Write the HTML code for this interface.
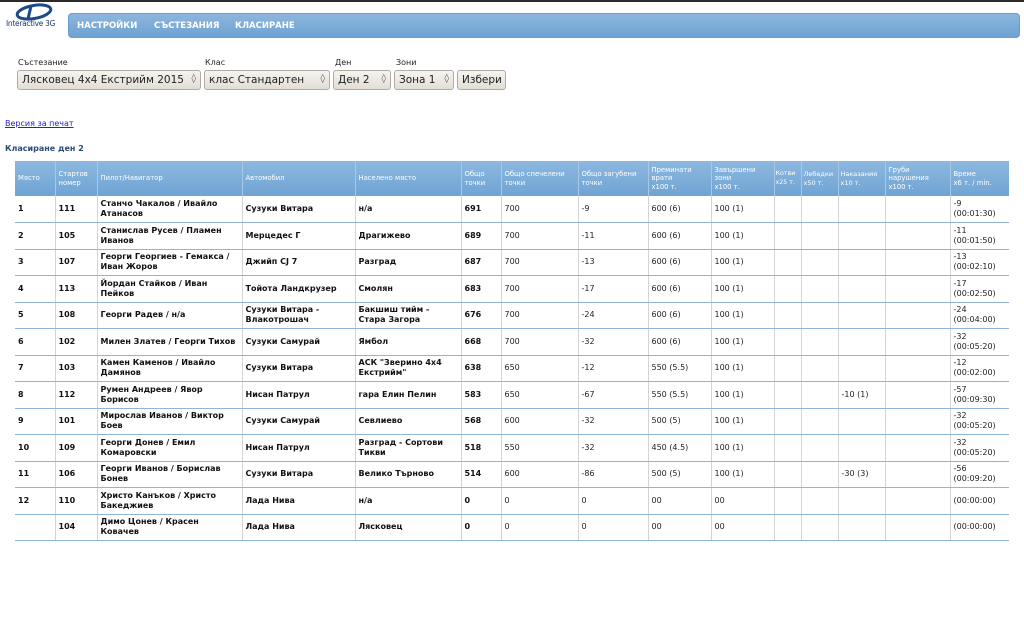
<!DOCTYPE html>
<html><head><meta charset="utf-8">
<style>
*{box-sizing:border-box}
body{margin:0;width:1024px;height:640px;background:#fff;font-family:"DejaVu Sans","Liberation Sans",sans-serif;position:relative;overflow:hidden}
.topline{position:absolute;left:0;top:0;width:1024px;height:2px;background:#2a2a2a}
.logo{position:absolute;left:4px;top:3px;width:60px;height:26px}
.logo .t{position:absolute;left:2px;top:16px;font:7.5px "DejaVu Sans",sans-serif;color:#1a3a6a;white-space:nowrap;letter-spacing:-0.3px}
.nav{position:absolute;left:68px;top:13px;width:952px;height:25px;border-radius:4px;background:linear-gradient(#8cb6de,#6ea2d2);border:1px solid #6a9ccc}
.nav span{position:absolute;top:7px;color:#fff;font-weight:bold;font-size:8.5px}
.lbl{position:absolute;top:58px;font-size:8px;color:#222}
.sel{position:absolute;top:70px;height:20px;border:1px solid #b0aca4;border-radius:3px;background:linear-gradient(#f6f4f0,#e2ded6);font-size:10.5px;color:#222;padding:3px 0 0 4px;white-space:nowrap;overflow:hidden}
.sel i{position:absolute;right:4px;top:3px;font-style:normal;font-size:9px;color:#555}
.link{position:absolute;left:5px;top:119px;font-size:8px;color:#2323c8;text-decoration:underline}
.h2{position:absolute;left:5px;top:144px;font-size:8px;font-weight:bold;color:#2c4a78}
table{position:absolute;left:15px;top:161px;border-collapse:collapse;table-layout:fixed;width:994px}
th{background:linear-gradient(#8cb8e0,#70a4d4);color:#fff;font-weight:normal;font-size:6.8px;text-align:left;vertical-align:middle;padding:0 1px 0 3px;height:35px;border-left:1px solid #a8c8e8;line-height:8.5px;white-space:nowrap;overflow:hidden}
td{font-size:8px;height:26.5px;padding:0 3px;border-left:1px solid #d4d4d4;border-bottom:1px solid #8fb5da;color:#222;line-height:10px;vertical-align:middle}
td.b{font-weight:bold;color:#111}
tr td:first-child,tr th:first-child{border-left:none}
</style></head><body>
<div class="topline"></div>
<div class="logo">
<svg width="56" height="18" viewBox="0 0 56 18"><ellipse cx="30" cy="9" rx="17" ry="6.5" fill="none" stroke="#1a4a8a" stroke-width="3" transform="rotate(-10 30 9)"/><path d="M27 3 L24 16" stroke="#1a4a8a" stroke-width="3"/></svg>
<div class="t">Interactive 3G</div>
</div>
<div class="nav"><span style="left:8px">НАСТРОЙКИ</span><span style="left:85px">СЪСТЕЗАНИЯ</span><span style="left:166px">КЛАСИРАНЕ</span></div>
<div class="lbl" style="left:18px">Състезание</div>
<div class="lbl" style="left:205px">Клас</div>
<div class="lbl" style="left:335px">Ден</div>
<div class="lbl" style="left:396px">Зони</div>
<div class="sel" style="left:17px;width:184px">Лясковец 4x4 Екстрийм 2015<i>◊</i></div>
<div class="sel" style="left:204px;width:126px">клас Стандартен<i>◊</i></div>
<div class="sel" style="left:333px;width:58px">Ден 2<i>◊</i></div>
<div class="sel" style="left:394px;width:60px">Зона 1<i>◊</i></div>
<div class="sel" style="left:457px;width:49px">Избери</div>
<div class="link">Версия за печат</div>
<div class="h2">Класиране ден 2</div>
<table>
<colgroup><col style="width:40px"><col style="width:42px"><col style="width:145px"><col style="width:113px"><col style="width:106px"><col style="width:40px"><col style="width:77px"><col style="width:70px"><col style="width:63px"><col style="width:63px"><col style="width:27px"><col style="width:37px"><col style="width:47px"><col style="width:65px"><col style="width:59px"></colgroup>
<tr><th>Място</th><th>Стартов<br>номер</th><th>Пилот/Навигатор</th><th>Автомобил</th><th>Населено място</th><th>Общо<br>точки</th><th>Общо спечелени<br>точки</th><th>Общо загубени<br>точки</th><th>Преминати<br>врати<br>x100 т.</th><th>Завършени<br>зони<br>x100 т.</th><th style="font-size:6.3px;padding:0 1px">Котви<br>x25 т.</th><th style="font-size:6.5px;padding:0 1px 0 2px">Лебедки<br>x50 т.</th><th style="font-size:6.5px;padding:0 1px 0 2px">Наказания<br>x10 т.</th><th>Груби<br>нарушения<br>x100 т.</th><th>Време<br>x6 т. / min.</th></tr>
<tr><td class="b">1</td><td class="b">111</td><td class="b">Станчо Чакалов / Ивайло Атанасов</td><td class="b">Сузуки Витара</td><td class="b">н/а</td><td class="b">691</td><td>700</td><td>-9</td><td>600 (6)</td><td>100 (1)</td><td></td><td></td><td></td><td></td><td>-9<br>(00:01:30)</td></tr>
<tr><td class="b">2</td><td class="b">105</td><td class="b">Станислав Русев / Пламен Иванов</td><td class="b">Мерцедес Г</td><td class="b">Драгижево</td><td class="b">689</td><td>700</td><td>-11</td><td>600 (6)</td><td>100 (1)</td><td></td><td></td><td></td><td></td><td>-11<br>(00:01:50)</td></tr>
<tr><td class="b">3</td><td class="b">107</td><td class="b">Георги Георгиев - Гемакса / Иван Жоров</td><td class="b">Джийп CJ 7</td><td class="b">Разград</td><td class="b">687</td><td>700</td><td>-13</td><td>600 (6)</td><td>100 (1)</td><td></td><td></td><td></td><td></td><td>-13<br>(00:02:10)</td></tr>
<tr><td class="b">4</td><td class="b">113</td><td class="b">Йордан Стайков / Иван Пейков</td><td class="b">Тойота Ландкрузер</td><td class="b">Смолян</td><td class="b">683</td><td>700</td><td>-17</td><td>600 (6)</td><td>100 (1)</td><td></td><td></td><td></td><td></td><td>-17<br>(00:02:50)</td></tr>
<tr><td class="b">5</td><td class="b">108</td><td class="b">Георги Радев / н/а</td><td class="b">Сузуки Витара - Влакотрошач</td><td class="b">Бакшиш тийм - Стара Загора</td><td class="b">676</td><td>700</td><td>-24</td><td>600 (6)</td><td>100 (1)</td><td></td><td></td><td></td><td></td><td>-24<br>(00:04:00)</td></tr>
<tr><td class="b">6</td><td class="b">102</td><td class="b" style="white-space:nowrap">Милен Златев / Георги Тихов</td><td class="b">Сузуки Самурай</td><td class="b">Ямбол</td><td class="b">668</td><td>700</td><td>-32</td><td>600 (6)</td><td>100 (1)</td><td></td><td></td><td></td><td></td><td>-32<br>(00:05:20)</td></tr>
<tr><td class="b">7</td><td class="b">103</td><td class="b">Камен Каменов / Ивайло Дамянов</td><td class="b">Сузуки Витара</td><td class="b">АСК "Зверино 4x4 Екстрийм"</td><td class="b">638</td><td>650</td><td>-12</td><td>550 (5.5)</td><td>100 (1)</td><td></td><td></td><td></td><td></td><td>-12<br>(00:02:00)</td></tr>
<tr><td class="b">8</td><td class="b">112</td><td class="b">Румен Андреев / Явор Борисов</td><td class="b">Нисан Патрул</td><td class="b">гара Елин Пелин</td><td class="b">583</td><td>650</td><td>-67</td><td>550 (5.5)</td><td>100 (1)</td><td></td><td></td><td>-10 (1)</td><td></td><td>-57<br>(00:09:30)</td></tr>
<tr><td class="b">9</td><td class="b">101</td><td class="b">Мирослав Иванов / Виктор Боев</td><td class="b">Сузуки Самурай</td><td class="b">Севлиево</td><td class="b">568</td><td>600</td><td>-32</td><td>500 (5)</td><td>100 (1)</td><td></td><td></td><td></td><td></td><td>-32<br>(00:05:20)</td></tr>
<tr><td class="b">10</td><td class="b">109</td><td class="b">Георги Донев / Емил Комаровски</td><td class="b">Нисан Патрул</td><td class="b">Разград - Сортови Тикви</td><td class="b">518</td><td>550</td><td>-32</td><td>450 (4.5)</td><td>100 (1)</td><td></td><td></td><td></td><td></td><td>-32<br>(00:05:20)</td></tr>
<tr><td class="b">11</td><td class="b">106</td><td class="b">Георги Иванов / Борислав Бонев</td><td class="b">Сузуки Витара</td><td class="b">Велико Търново</td><td class="b">514</td><td>600</td><td>-86</td><td>500 (5)</td><td>100 (1)</td><td></td><td></td><td>-30 (3)</td><td></td><td>-56<br>(00:09:20)</td></tr>
<tr><td class="b">12</td><td class="b">110</td><td class="b">Христо Канъков / Христо Бакеджиев</td><td class="b">Лада Нива</td><td class="b">н/а</td><td class="b">0</td><td>0</td><td>0</td><td>00</td><td>00</td><td></td><td></td><td></td><td></td><td>(00:00:00)</td></tr>
<tr><td class="b"></td><td class="b">104</td><td class="b">Димо Цонев / Красен Ковачев</td><td class="b">Лада Нива</td><td class="b">Лясковец</td><td class="b">0</td><td>0</td><td>0</td><td>00</td><td>00</td><td></td><td></td><td></td><td></td><td>(00:00:00)</td></tr>
</table>
</body></html>
